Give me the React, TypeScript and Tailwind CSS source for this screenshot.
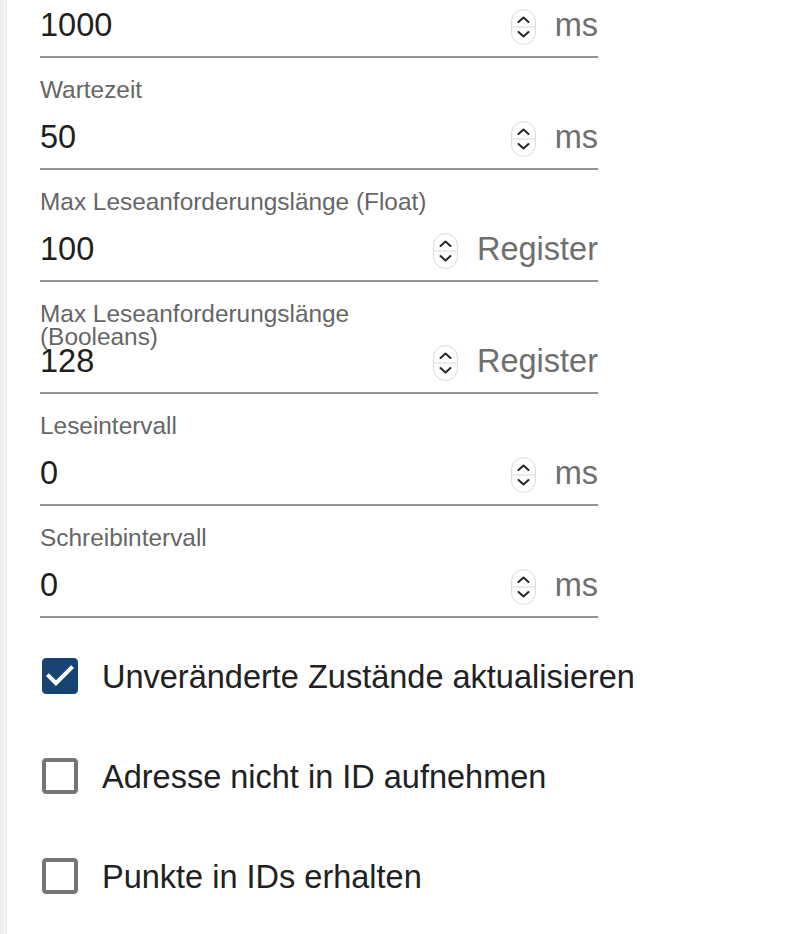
import React from 'react';

/**
 * Modbus adapter settings - number fields with units and option checkboxes.
 */

type Field = {
  label?: string;
  value: string;
  unit: string;
};

const fields: Field[] = [
  { value: '1000', unit: 'ms' },
  { label: 'Wartezeit', value: '50', unit: 'ms' },
  { label: 'Max Leseanforderungslänge (Float)', value: '100', unit: 'Register' },
  { label: 'Max Leseanforderungslänge (Booleans)', value: '128', unit: 'Register' },
  { label: 'Leseintervall', value: '0', unit: 'ms' },
  { label: 'Schreibintervall', value: '0', unit: 'ms' },
];

const options = [
  { label: 'Unveränderte Zustände aktualisieren', checked: true },
  { label: 'Adresse nicht in ID aufnehmen', checked: false },
  { label: 'Punkte in IDs erhalten', checked: false },
];

function Spinner() {
  return (
    <svg width="25" height="36" viewBox="0 0 25 36" className="mt-[3px] shrink-0">
      <rect x="0.5" y="0.5" width="24" height="35" rx="12" fill="#fff" stroke="#dcdcdc" />
      <line x1="1" y1="18" x2="24" y2="18" stroke="#e6e6e6" strokeWidth="1.5" />
      <path d="M7.5 13 L12.5 8.5 L17.5 13" fill="none" stroke="#262626" strokeWidth="2" strokeLinecap="round" strokeLinejoin="round" />
      <path d="M7.5 23 L12.5 27.5 L17.5 23" fill="none" stroke="#262626" strokeWidth="2" strokeLinecap="round" strokeLinejoin="round" />
    </svg>
  );
}

function NumberField({ label, value, unit }: Field) {
  return (
    <div className={label ? 'pt-[20px]' : 'pt-[2px]'}>
      {label && (
        <div className="h-[24px] max-w-[410px] text-[24.4px] leading-[23px] text-[#666666]">
          {label}
        </div>
      )}
      <div className={`flex h-[46px] items-center ${label ? 'mt-[12px]' : ''}`}>
        <span className="flex-1 text-[32.5px] leading-[46px] text-[#1f1f1f]">{value}</span>
        <Spinner />
        <span className="ml-[19px] text-[32.5px] leading-[46px] text-[#6f6f6f]">{unit}</span>
      </div>
      <div className="mt-[8px] h-[2px] bg-[#949494]" />
    </div>
  );
}

function CheckboxRow({ label, checked }: { label: string; checked: boolean }) {
  return (
    <label className="-ml-[22px] flex h-[84px] items-center">
      <span className="flex h-[84px] w-[84px] items-center justify-center">
        {checked ? (
          <svg width="48" height="48" viewBox="0 0 24 24" fill="#184474">
            <path d="M19 3H5c-1.11 0-2 .9-2 2v14c0 1.1.89 2 2 2h14c1.11 0 2-.9 2-2V5c0-1.1-.89-2-2-2zm-9 14l-5-5 1.41-1.41L10 14.17l7.59-7.59L19 8l-9 9z" />
          </svg>
        ) : (
          <svg width="48" height="48" viewBox="0 0 24 24" fill="#767676">
            <path d="M19 5v14H5V5h14m0-2H5c-1.1 0-2 .9-2 2v14c0 1.1.9 2 2 2h14c1.1 0 2-.9 2-2V5c0-1.1-.9-2-2-2z" />
          </svg>
        )}
      </span>
      <span className="mt-[2px] text-[32.5px] leading-[40px] text-[#212121]">{label}</span>
    </label>
  );
}

export default function App() {
  return (
    <div className="flex h-[934px] overflow-hidden bg-white font-['Liberation_Sans',Arial,sans-serif]">
      <div className="w-[7px] shrink-0 border-r border-[#e8e8e8] bg-gradient-to-r from-[#ededed] to-[#f7f7f7]" />
      <div className="pl-[33px]">
        <div className="w-[558px]">
          {fields.map((f, i) => (
            <NumberField key={i} {...f} />
          ))}
        </div>
        <div className="mt-[16px] flex flex-col gap-[16px]">
          {options.map((o) => (
            <CheckboxRow key={o.label} label={o.label} checked={o.checked} />
          ))}
        </div>
      </div>
    </div>
  );
}
